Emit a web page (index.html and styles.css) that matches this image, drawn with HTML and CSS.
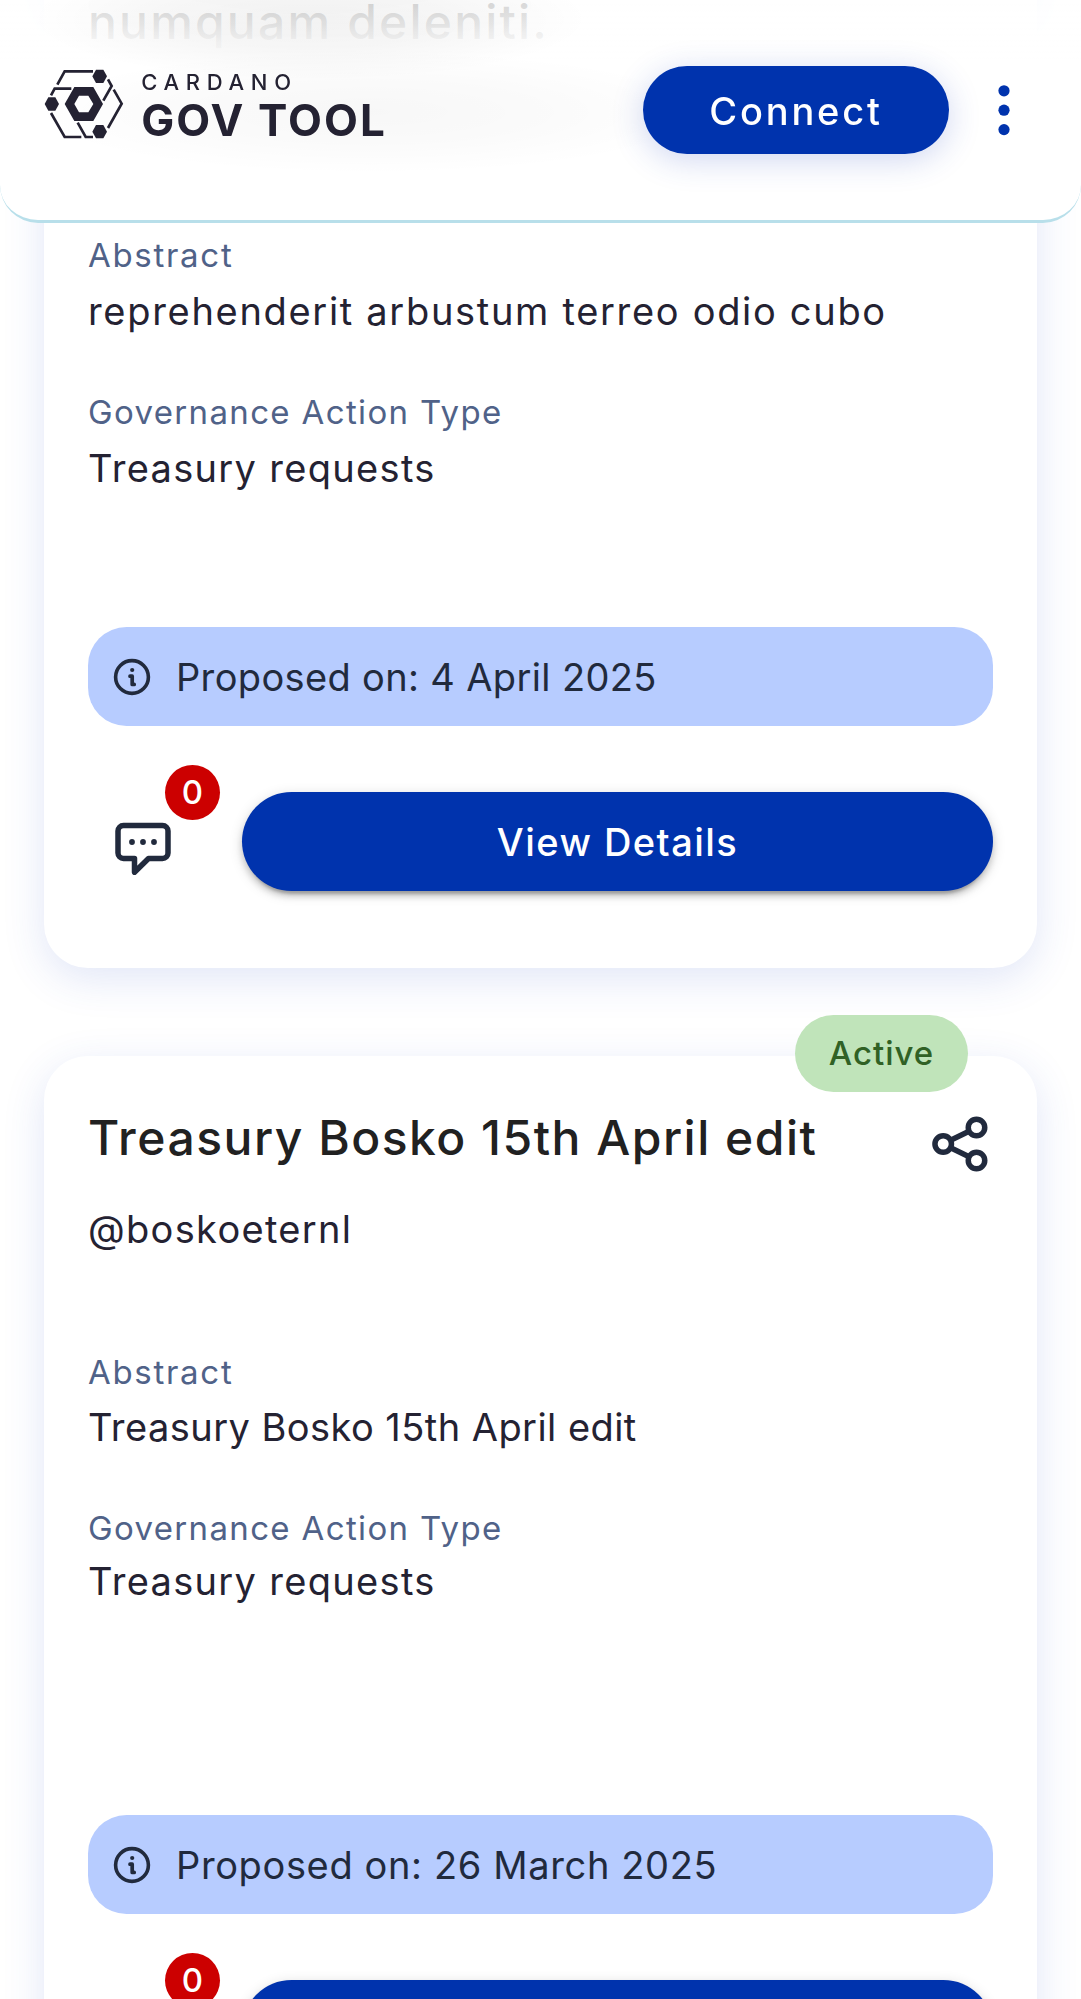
FILE: index.html
```
<!DOCTYPE html>
<html lang="en">
<head>
<meta charset="utf-8">
<title>Cardano GovTool</title>
<link rel="stylesheet" href="styles.css">
</head>
<body>
<svg width="0" height="0" class="sprite" aria-hidden="true">
  <symbol id="info" viewBox="0 0 38 38">
    <circle cx="19" cy="19" r="16.4" fill="none" stroke="currentColor" stroke-width="3.6"/>
    <circle cx="19.2" cy="12" r="2.1" fill="currentColor"/>
    <path d="M17 18.2h2.2v8.2h2" fill="none" stroke="currentColor" stroke-width="3.7" stroke-linecap="round" stroke-linejoin="round"/>
  </symbol>
  <symbol id="chat" viewBox="0 0 66 66">
    <path d="M13.500 16.500h39a5.500 5.500 0 0 1 5.500 5.500v22a5.500 5.500 0 0 1-5.500 5.500H38.500L24.500 63.300V49.500H13.500a5.500 5.500 0 0 1-5.500-5.500V22a5.500 5.500 0 0 1 5.500-5.500z" fill="none" stroke="currentColor" stroke-width="5.500" stroke-linejoin="round"/>
    <g fill="currentColor"><circle cx="22" cy="33" r="2.900"/><circle cx="33" cy="33" r="2.900"/><circle cx="44" cy="33" r="2.900"/></g>
  </symbol>
</svg>

<header class="topbar">
  <a class="brand">
    <svg class="brand-mark" viewBox="40 55 240 210">
      <g fill="none" stroke="#242232" stroke-width="8">
        <path d="M80 102L102 62H187"/>
        <path d="M232 86L243 106L218 150"/>
        <path d="M249 117L273 159L232 232"/>
        <path d="M61 134L72 114H122"/>
        <path d="M61 187L102 259H152"/>
        <path d="M141 216L165 259H187"/>
      </g>
      <g fill="#242232">
        <path d="M185 77L196 57H218L229 77L218 97H196z"/>
        <path d="M185 243L196 223H218L229 243L218 263H196z"/>
        <path d="M42 160L53 140H74L85 160L74 180H53z"/>
        <path fill-rule="evenodd" d="M102 160L131 109H188L217 160L188 211H131zM131 160L145 185H173L188 160L173 135H145z"/>
      </g>
    </svg>
    <span class="brand-text">
      <span class="brand-top">CARDANO</span>
      <span class="brand-bottom">GOV TOOL</span>
    </span>
  </a>
  <button class="connect">Connect</button>
  <svg class="menu" viewBox="0 0 12 52"><g fill="#0033ad"><circle cx="6" cy="6.800" r="5.600"/><circle cx="6" cy="26.200" r="5.600"/><circle cx="6" cy="45.600" r="5.600"/></g></svg>
</header>

<main class="list">
  <article class="card card-first">
    <h2 class="title title-first">numquam deleniti.</h2>
    <div class="field field-first">
      <div class="label abstract">Abstract</div>
      <div class="value wide">reprehenderit arbustum terreo odio cubo</div>
    </div>
    <div class="field">
      <div class="label">Governance Action Type</div>
      <div class="value">Treasury requests</div>
    </div>
    <div class="date"><svg class="info"><use href="#info"/></svg><span>Proposed on: 4 April 2025</span></div>
    <div class="actions">
      <div class="comments"><svg class="chat"><use href="#chat"/></svg><span class="count">0</span></div>
      <button class="details">View Details</button>
    </div>
  </article>

  <article class="card card-second">
    <span class="status">Active</span>
    <div class="heading">
      <h2 class="title">Treasury Bosko 15th April edit</h2>
      <svg class="share" viewBox="0 0 66 66"><g fill="none" stroke="#212a3d" stroke-width="5.500"><circle cx="16.200" cy="33" r="8.250"/><circle cx="49.500" cy="16.500" r="8.250"/><circle cx="49.500" cy="49.500" r="8.250"/><path d="M23.600 29.300L42.100 20.200M23.600 36.700L42.100 45.800"/></g></svg>
    </div>
    <div class="value author">@boskoeternl</div>
    <div class="field">
      <div class="label abstract">Abstract</div>
      <div class="value tight">Treasury Bosko 15th April edit</div>
    </div>
    <div class="field">
      <div class="label">Governance Action Type</div>
      <div class="value">Treasury requests</div>
    </div>
    <div class="date"><svg class="info"><use href="#info"/></svg><span class="date-long">Proposed on: 26 March 2025</span></div>
    <div class="actions">
      <div class="comments"><svg class="chat"><use href="#chat"/></svg><span class="count">0</span></div>
      <button class="details">View Details</button>
    </div>
  </article>
</main>
</body>
</html>
```
FILE: styles.css
```
* { box-sizing: border-box; }
html { height: 1999px; overflow: hidden; }
body {
  margin: 0;
  height: 1999px;
  overflow: hidden;
  background: #fff;
  font-family: Inter, "Liberation Sans", sans-serif;
  color: #242232;
}
button { border: 0; padding: 0; font-family: inherit; color: #fff; background: #0033ad; }
svg { display: block; flex: none; }
.sprite { position: absolute; }

/* Top bar */
.topbar {
  position: fixed;
  z-index: 5;
  top: 0;
  left: 0;
  width: 1081px;
  height: 223px;
  display: flex;
  align-items: flex-start;
  padding: 66px 71px 0 44px;
  border-bottom: 3px solid #b8dfea;
  border-radius: 0 0 38px 38px;
  background:
    radial-gradient(ellipse 280px 62px at 310px 18px, rgba(0,0,0,.05), rgba(0,0,0,.035) 50%, transparent),
    radial-gradient(ellipse 340px 62px at 370px 112px, rgba(0,0,0,.03), rgba(0,0,0,.018) 50%, transparent),
    linear-gradient(rgba(255,255,255,.83), rgba(255,255,255,.97) 42px, rgba(255,255,255,.98) 60px);
}
.brand { display: flex; align-items: flex-start; }
.brand-mark { width: 80px; height: 70px; margin-top: 2.600px; }
.brand-text { display: flex; flex-direction: column; margin: 2px 0 0 17.200px; }
.brand-top { font-size: 22px; font-weight: 500; line-height: 28px; letter-spacing: 6.700px; }
.brand-bottom { font-size: 44px; font-weight: 650; line-height: 49px; letter-spacing: 2.100px; }
.connect {
  width: 306px;
  height: 88px;
  margin-left: auto;
  padding-top: 1px;
  border-radius: 44px;
  font-size: 38px;
  font-weight: 500;
  letter-spacing: 2.800px;
  box-shadow: 0 6px 32px rgba(40,75,190,.22);
}
.menu { width: 12px; height: 52px; margin: 18px 0 0 49px; }

/* Cards */
.list { display: flex; flex-direction: column; gap: 88px; padding: 0 44px; margin-top: -60px; }
.card {
  position: relative;
  padding: 44px 44px 77px;
  border-radius: 44px;
  background: #fff;
  box-shadow: 0 11px 42px rgba(47,80,200,.145);
}
.card-first { padding-top: 51.500px; }
.title { margin: 0; font-size: 48px; font-weight: 500; line-height: 60px; letter-spacing: 1.500px; color: #212121; white-space: nowrap; }
.title-first { letter-spacing: 2.200px; }
.heading { display: flex; justify-content: space-between; padding-top: 8px; height: 68px; }
.share { width: 66px; height: 66px; margin: 3.300px 0 0; }
.author { margin-top: 32.900px; letter-spacing: 1.600px; }
.field { display: flex; flex-direction: column; gap: 6.600px; margin-top: 50.500px; }
.field-first { margin-top: 181.200px; }
.author + .field { margin-top: 92.800px; gap: 5.500px; }
.author + .field + .field { gap: 3.200px; }
.label { font-size: 33px; line-height: 44px; letter-spacing: 1.350px; color: #506288; }
.abstract { letter-spacing: 1.700px; }
.value { font-size: 38px; line-height: 56px; letter-spacing: 1.320px; white-space: nowrap; }
.wide { letter-spacing: 1.690px; }
.tight { letter-spacing: .450px; }
.date {
  display: flex;
  align-items: center;
  gap: 25px;
  height: 99px;
  margin-top: 130.500px;
  padding: 1px 0 0 25px;
  border-radius: 38.500px;
  background: #b7ccff;
  color: #212a3d;
  font-size: 38px;
  letter-spacing: .350px;
}
.date-long { letter-spacing: .630px; }
.card-second .date { margin-top: 205.800px; }
.info { width: 38px; height: 38px; }
.actions { display: flex; margin-top: 66px; }
.comments { position: relative; width: 154px; padding: 17px 0 0 22px; color: #212a3d; }
.chat { width: 66px; height: 66px; }
.count {
  position: absolute;
  left: 77px;
  top: -27px;
  width: 55px;
  height: 55px;
  border-radius: 50%;
  background: #c00;
  color: #fff;
  font-size: 33px;
  font-weight: 500;
  line-height: 54px;
  text-align: center;
}
.details {
  flex: 1;
  height: 99px;
  padding-top: 1px;
  border-radius: 49.500px;
  font-size: 38px;
  font-weight: 500;
  letter-spacing: 1.450px;
  box-shadow: 0 8px 3px -5px rgba(0,0,0,.2), 0 5px 6px rgba(0,0,0,.16), 0 3px 14px rgba(0,0,0,.14);
}
.status {
  position: absolute;
  top: -41px;
  right: 69px;
  width: 173px;
  height: 77px;
  border-radius: 38.500px;
  background: #c0e4ba;
  color: #306125;
  font-size: 33px;
  font-weight: 500;
  line-height: 76px;
  letter-spacing: 1px;
  text-align: center;
}
```
